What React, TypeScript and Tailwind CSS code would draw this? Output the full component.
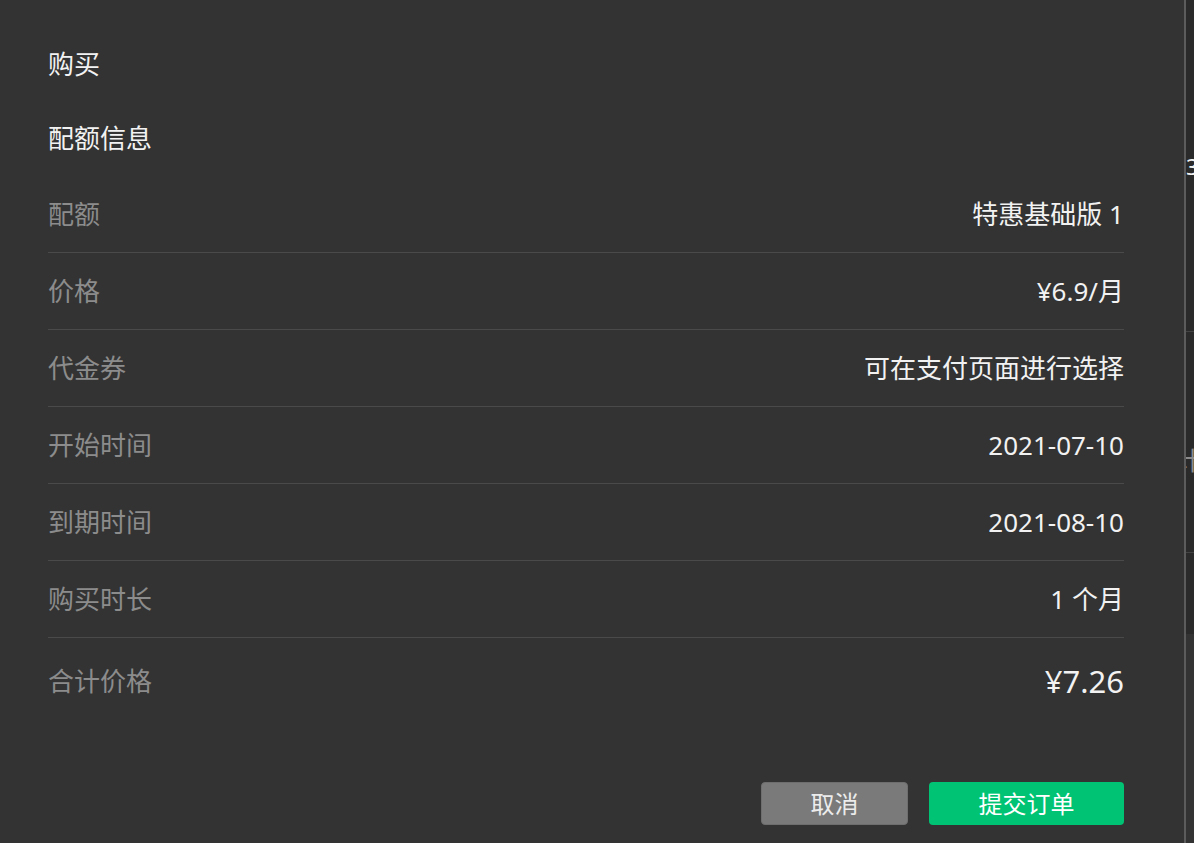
const rows: { label: string; value: string }[] = [
  { label: "配额", value: "特惠基础版 1" },
  { label: "价格", value: "¥6.9/月" },
  { label: "代金券", value: "可在支付页面进行选择" },
  { label: "开始时间", value: "2021-07-10" },
  { label: "到期时间", value: "2021-08-10" },
  { label: "购买时长", value: "1 个月" },
];

export default function App() {
  return (
    <div
      className="flex h-[843px] w-[1194px] overflow-hidden bg-[#333333]"
      style={{ fontFamily: '"Noto Sans", "Noto Sans CJK SC", sans-serif' }}
    >
      <div className="flex w-[1184px] shrink-0 flex-col px-[48px] pt-[46px] pr-[60px]">
        <div className="h-[36px] text-[26px] leading-[36px] text-[#f2f2f2]">购买</div>
        <div className="mt-[38px] h-[36px] text-[26px] leading-[36px] text-[#f2f2f2]">
          配额信息
        </div>

        <div className="mt-[20px] flex flex-col">
          {rows.map((row) => (
            <div
              key={row.label}
              className="flex h-[77px] items-center justify-between border-b border-[#4a4a4a] text-[26px]"
            >
              <span className="text-[#8c8c8c]">{row.label}</span>
              <span className="text-[#f2f2f2]">{row.value}</span>
            </div>
          ))}
          <div className="flex h-[86px] items-center justify-between">
            <span className="text-[26px] text-[#8c8c8c]">合计价格</span>
            <span className="text-[31px] text-[#f2f2f2]">¥7.26</span>
          </div>
        </div>

        <div className="mt-[58px] flex justify-end gap-[21px]">
          <button className="h-[43px] w-[147px] rounded-[4px] border border-[#6e6e6e] bg-[#7a7a7a] text-[24px] text-[#ececec]">
            取消
          </button>
          <button className="h-[43px] w-[195px] rounded-[4px] bg-[#00c474] text-[24px] text-white">
            提交订单
          </button>
        </div>
      </div>

      <div className="w-[2px] shrink-0 bg-[#5c5c5c]" />

      <div className="flex flex-1 flex-col overflow-hidden">
        <div className="flex h-[634px] flex-col bg-[#2a2a2a]">
          <div className="mt-[148px] h-[36px] text-[22px] leading-[36px] text-[#f2f2f2]">3</div>
          <div className="mt-[147px] h-px bg-[#444444]" />
          <div className="mt-[110px] -ml-[10px] h-[36px] text-[25px] leading-[36px] text-[#8c8c8c]">
            计
          </div>
          <div className="mt-[74px] h-px bg-[#444444]" />
        </div>
        <div className="flex-1 bg-[#333333]" />
      </div>
    </div>
  );
}
